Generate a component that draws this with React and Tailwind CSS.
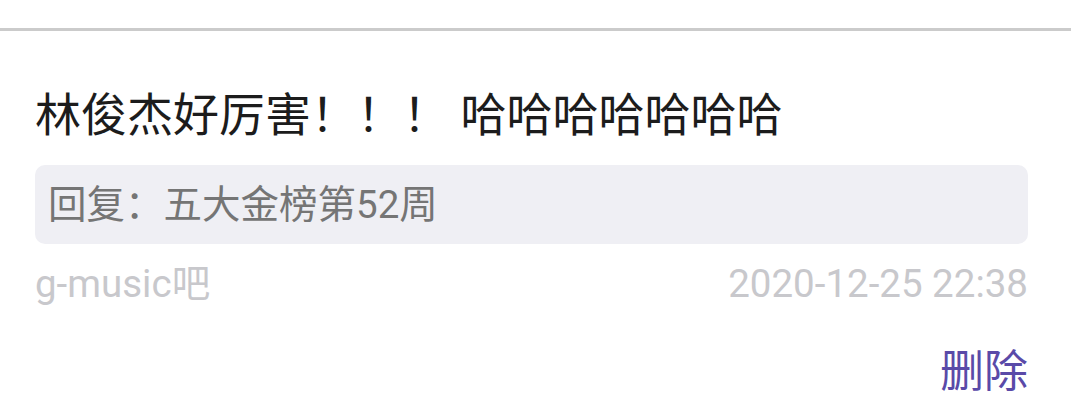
const font = { fontFamily: "Roboto, 'Noto Sans CJK SC', sans-serif" };

const App = () => {
    return (
        <div className="w-[1071px] h-[417px] bg-white overflow-hidden" style={font}>
            <div className="h-[31px] border-b-[3px] border-[#cbcbcb]" />
            <div className="pl-[35px] pr-[43px]">
                <p className="mt-[61px] text-[46px] leading-[46px] text-[#1c1c1c] whitespace-nowrap">
                    林俊杰好厉害！！！ 哈哈哈哈哈哈哈
                </p>
                <div className="mt-[27px] h-[79px] rounded-[10px] bg-[#efeff4] flex items-center px-[13px]">
                    <span className="text-[38.5px] leading-[38px] text-[#757575]">回复：五大金榜第52周</span>
                </div>
                <div className="mt-[21px] flex justify-between text-[38.5px] leading-[38px] text-[#c8c8cc]">
                    <span>g-music吧</span>
                    <span>2020-12-25 22:38</span>
                </div>
                <div className="mt-[47px] flex justify-end">
                    <button className="text-[44px] leading-[44px] text-[#5a4aa8]">删除</button>
                </div>
            </div>
        </div>
    );
};

export default App;
